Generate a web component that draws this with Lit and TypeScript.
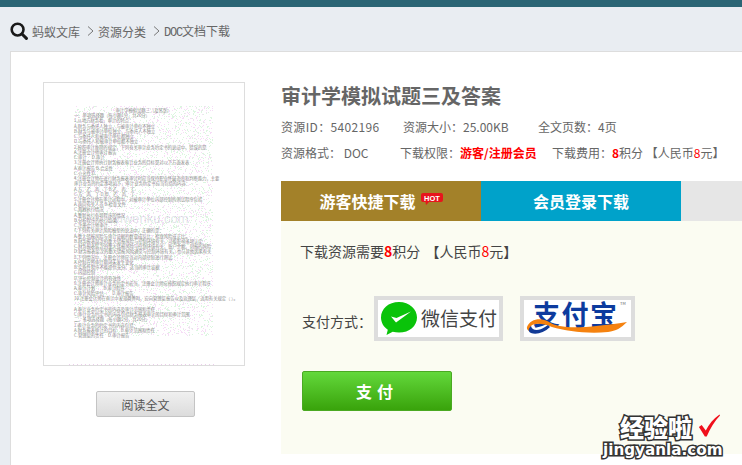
import { LitElement, html, css } from "lit";
import { customElement } from "lit/decorators.js";

const DOC_LINES = [
  "一、单项选择题（每小题1分，共20分）",
  "1.从地方财务看，审计的特点：",
  "A.财务与委托人独立，与被审计单位不独立",
  "B.财务与被审计单位独立，与委托人不独立",
  "C.与委托人和被审计单位都独立",
  "D.与委托人和被审计单位都不独立",
  "2.按照审计准则的规定，下列有关审计业务约定书的说法中，错误的是",
  "A.注册会计师审计报告",
  "C.审计 　D.审计",
  "3.注册会计师执行财务报表审计业务的目标是对以下方面发表",
  "A.审计报告 B.合法性",
  "C.公允性 D.",
  "4.注册会计师在进行财务报表审计时应当保持职业怀疑态度和判断能力，主要",
  "审计业务的约定事项如下，审计业务约定书应当包括的内容：",
  "A.方、乙、丙、丁 B.乙、丙、丁",
  "C.方、丙、丁 D.甲、乙、丙、丁",
  "5.注册会计师在审计过程中，对被审计单位内部控制的测试程序包括",
  "A.询问有关人员 B.检查文件",
  "C.观察执行情况",
  "A.重新执行各项程序的情况",
  "B.分析程序的执行结果",
  "C.注册会计师审计",
  "7.下列有关审计风险模型的说法中，正确的是：",
  "A.重大错报风险与审计证据的数量成反比，检查风险成正比。",
  "B.财务报表层次的重大错报风险与控制环境有关，可能影响多项认定",
  "C.财务报表层次的重大错报风险与控制环境有关，账户余额、列报的风险",
  "D.财务报表层次的重大错报风险通常与控制环境有关，也与其他因素有关",
  "8.下列情况中，注册会计师应当对内部控制进行测试",
  "A.控制在所审计期间未发生变化",
  "B.实质性程序不能提供充分、适当的审计证据",
  "C.内部控制",
  "D.评价控制设计的有效性",
  "9.注册会计师审计业务约定书应当，注册会计师应按照规定执行审计程序",
  "A.审计计划　　B.审计程序",
  "C.审计风险评估　　D.审计报告",
  "10.注册会计师在审计中发现舞弊时，应向管理层报告以及治理层，适用有关规定（  ）。",
  "",
  "A.审计业务约定书的内容及审计范围和责任",
  "C.审计业务约定书的内容包括财务报表审计的目标和审计范围",
  "二、多项选择题（每小题2分，共20分）",
  "1.审计业务的约定书的内容包括：",
  "A.财务报表审计的目标　B.审计范围和责任",
  "C.管理层的责任　D.审计报告",
];

function speckle(seed: number, count: number) {
  let s = seed;
  let d = "";
  for (let i = 0; i < count; i++) {
    s = (s * 1103515245 + 12345) & 0x7fffffff;
    const x = (s >> 8) % 139;
    s = (s * 1103515245 + 12345) & 0x7fffffff;
    const y = (s >> 8) % 230;
    d += `M${x} ${y}h1v1h-1z`;
  }
  return d;
}
const PINK = speckle(7919, 3200);
const GREEN = speckle(104729, 3200);

@customElement("app-root")
export class AppRoot extends LitElement {
  static styles = css`
    :host {
      display: block;
      width: 742px;
      height: 465px;
      overflow: hidden;
      position: relative;
      background: #e9edf2;
      font-family: "Noto Sans CJK SC", "Liberation Sans", sans-serif;
      color: #666;
    }
    .topbar { height: 7px; background: #2b6575; }
    .crumbs {
      height: 44px;
      display: flex;
      align-items: center;
      padding: 4px 0 0 10px;
      box-sizing: border-box;
      font-size: 12px;
      color: #666;
    }
    .crumbs .mag { width: 18px; height: 18px; margin-right: 4px; }
    .crumbs .chev { width: 7px; height: 10px; margin: 0 4px 0 7px; }
    .mono { font-family: "Liberation Mono", monospace; font-size: 12px; letter-spacing: -1.2px; }
    .card {
      margin-left: 10px;
      height: 414px;
      box-sizing: border-box;
      border-top: 1px solid #ddd;
      border-left: 1px solid #ddd;
      background: #fff;
      display: flex;
      padding: 30px 0 0 32px;
    }
    .left { width: 202px; flex: none; display: flex; flex-direction: column; }
    .doc {
      position: relative;
      width: 202px;
      height: 284px;
      box-sizing: border-box;
      border: 1px solid #ddd;
      background: #fff;
      overflow: hidden;
      padding: 25px 0 0 30px;
    }
    .specks { position: absolute; left: 30px; top: 23px; width: 139px; height: 230px; }
    .doc-lines { position: relative; width: 146px; }
    .doc-title { text-align: center; width: 139px; }
    .doc-line {
      font-size: 4.3px;
      line-height: 5.24px;
      height: 5.24px;
      white-space: nowrap;
      color: #8c8c8c;
    }
    .doc-mark {
      position: absolute;
      left: 63px;
      top: 128px;
      font-family: "Liberation Sans", sans-serif;
      font-size: 13px;
      color: rgba(150, 160, 175, 0.3);
    }
    .doc-foot {
      position: absolute;
      left: 25px;
      bottom: 0;
      width: 146px;
      height: 1px;
      background: repeating-linear-gradient(90deg, #eccdec 0 1px, transparent 1px 4px);
    }
    .read {
      margin: 25px 0 0 53px;
      width: 99px;
      height: 26px;
      box-sizing: border-box;
      border: 1px solid #c4c4c4;
      border-radius: 2px;
      background: linear-gradient(#f0f0f0, #dcdcdc);
      font: inherit;
      font-size: 12px;
      color: #555;
      padding: 0;
    }
    .right { margin-left: 36px; flex: 1; min-width: 0; }
    .title { margin: 0; font-size: 20px; line-height: 28px; font-weight: 700; color: #666; }
    .meta { display: flex; font-size: 12px; height: 26px; align-items: center; white-space: nowrap; }
    .meta.first { margin-top: 3px; }
    .meta .a { width: 122px; flex: none; letter-spacing: 0.35px; }
    .meta .b { width: 135px; flex: none; }
    .meta .c { width: 119px; flex: none; }
    .meta .d { width: 152px; flex: none; }
    .red { color: #f00; }
    b.red { font-weight: 700; }
    .tabs { display: flex; height: 40px; margin-top: 16px; }
    .tab {
      width: 200px;
      display: flex;
      align-items: center;
      justify-content: center;
      color: #fff;
      font-size: 16px;
      font-weight: 700;
    }
    .tab.guest { background: #a38129; }
    .tab.member { background: #00a2ca; }
    .tab.rest { flex: 1; background: #e6e6e6; }
    .hot { width: 22px; height: 13px; margin-left: 5px; margin-top: -3px; }
    .hot text { font-family: "Liberation Sans", sans-serif; font-size: 7.5px; font-weight: 700; fill: #fff; }
    .panel {
      height: 233px;
      box-sizing: border-box;
      background: #fbfcf2;
      padding: 20px 0 0 21px;
      color: #444;
      font-size: 14px;
    }
    .need { line-height: 20px; white-space: nowrap; margin-left: -2px; word-spacing: 2px; }
    .pay { display: flex; align-items: center; margin-top: 35px; height: 45px; }
    .pay-label { width: 72px; flex: none; padding-top: 4px; }
    .logo {
      box-sizing: border-box;
      height: 45px;
      border: 4px solid #ddd;
      background: #fff;
      display: block;
      flex: none;
    }
    .logo.wx { width: 129px; margin-right: 17px; }
    .logo.ali { width: 115px; }
    .logo text { font-family: "Noto Sans CJK SC", sans-serif; }
    .paybtn {
      display: block;
      margin-top: 30px;
      width: 150px;
      height: 40px;
      padding: 0;
      border: 1px solid #4aa922;
      border-radius: 2px;
      background: linear-gradient(#63d83b, #39a30b);
      color: #fff;
      font: inherit;
      font-size: 16px;
      font-weight: 700;
      letter-spacing: 5px;
    }
    .wm { position: absolute; left: 603px; top: 412px; width: 130px; height: 50px; }
    .wm-cn {
      position: absolute;
      left: 17px;
      top: 1px;
      font-size: 24px;
      line-height: 28px;
      font-weight: 900;
      color: #fff;
      -webkit-text-stroke: 3px #333;
      paint-order: stroke fill;
      white-space: nowrap;
    }
    .wm-en {
      position: absolute;
      left: 0;
      top: 28px;
      font-family: "DejaVu Sans", sans-serif;
      font-size: 15.2px;
      line-height: 20px;
      font-weight: 700;
      color: #fff;
      -webkit-text-stroke: 3px #333;
      paint-order: stroke fill;
      white-space: nowrap;
    }
    .wm-check { position: absolute; left: 95px; top: 1px; width: 22px; height: 25px; }
  `;

  private chev() {
    return html`<svg class="chev" viewBox="0 0 7 10"><path d="M1 .5 6 5 1 9.5" fill="none" stroke="#777" stroke-width="1"/></svg>`;
  }

  render() {
    return html`
      <div class="topbar"></div>
      <nav class="crumbs">
        <svg class="mag" viewBox="0 0 18 18">
          <circle cx="7.6" cy="7.6" r="5.9" fill="none" stroke="#1a1a1a" stroke-width="2.6"/>
          <path d="M12 12 16.4 16.4" stroke="#1a1a1a" stroke-width="3" stroke-linecap="round"/>
        </svg>
        <span>蚂蚁文库</span>${this.chev()}<span>资源分类</span>${this.chev()}<span><span class="mono">DOC</span>文档下载</span>
      </nav>
      <section class="card">
        <div class="left">
          <div class="doc">
            <svg class="specks" viewBox="0 0 139 230">
              <path d=${PINK} fill="#f6dcf6"></path>
              <path d=${GREEN} fill="#dcf6e0"></path>
            </svg>
            <div class="doc-lines">
              <div class="doc-line doc-title">审计学模拟试题三（及答案）</div>
              ${DOC_LINES.map((l) => html`<div class="doc-line">${l}</div>`)}
            </div>
            <div class="doc-mark">syiwenku.com</div>
            <div class="doc-foot"></div>
          </div>
          <button class="read">阅读全文</button>
        </div>
        <div class="right">
          <h1 class="title">审计学模拟试题三及答案</h1>
          <div class="meta first">
            <span class="a">资源ID：5402196</span>
            <span class="b">资源大小：25.00KB</span>
            <span>全文页数：4页</span>
          </div>
          <div class="meta">
            <span class="c">资源格式： DOC</span>
            <span class="d">下载权限：<b class="red">游客/注册会员</b></span>
            <span>下载费用：<b class="red">8</b>积分 【人民币<span class="red">8</span>元】</span>
          </div>
          <div class="tabs">
            <div class="tab guest">游客快捷下载
              <svg class="hot" viewBox="0 0 22 13">
                <path d="M2 0H20Q22 0 22 2V7Q22 9 20 9H8L5 12 4.5 9H2Q0 9 0 7V2Q0 0 2 0Z" fill="#e8141c"/>
                <text x="11" y="7.500" text-anchor="middle">HOT</text>
              </svg>
            </div>
            <div class="tab member">会员登录下载</div>
            <div class="tab rest"></div>
          </div>
          <div class="panel">
            <div class="need">下载资源需要<b class="red">8</b>积分 【人民币<span class="red">8</span>元】</div>
            <div class="pay">
              <span class="pay-label">支付方式：</span>
              <svg class="logo wx" viewBox="0 0 121 37">
                <path d="M21 2C10.5 2 3 8.8 3 17.5c0 5 2.6 9.3 6.8 12.2L8.5 35l6.2-3.2c2 .5 4.100 .8 6.300 .8 10.500 0 18-6.800 18-15.100S31.500 2 21 2Z" fill="#0ac30a"/>
                <path d="M13 16.500 18 22.500 33 11.500 18.500 18Z" fill="#fff"/>
                <text x="43" y="26" font-size="19" fill="#444">微信支付</text>
              </svg>
              <svg class="logo ali" viewBox="0 0 107 37">
                <text x="9" y="25" font-size="27" font-weight="700" fill="#0d3b9e" textLength="84">支付宝</text>
                <path d="M3 27C6 19 17 17 25 22C37 30 64 28 103 22C97 28 92 31 84 32C62 34 43 31 28 27C18 23 10 23 7 26C6 28 8 31 13 31C8 33 2 31 3 27Z" fill="#f5820f"/>
                <path d="M7 26C8 31 15 31 21 27L24 25 26 27C20 33 12 35 7 33 3 31 5 28 7 26Z" fill="#123a96"/>
                <text x="96" y="5" font-size="4" fill="#666">TM</text>
              </svg>
            </div>
            <button class="paybtn">支付</button>
          </div>
        </div>
      </section>
      <div class="wm">
        <span class="wm-cn">经验啦</span>
        <svg class="wm-check" viewBox="0 0 24 25">
          <path d="M1 14 4 12 8.500 18C12 11 16.500 5.500 23.500 .5L24 1.500C18 8 13.500 15 9.500 24.500H7.500Z" fill="#f0101c"/>
        </svg>
        <span class="wm-en">jingyanla.com</span>
      </div>
    `;
  }
}
